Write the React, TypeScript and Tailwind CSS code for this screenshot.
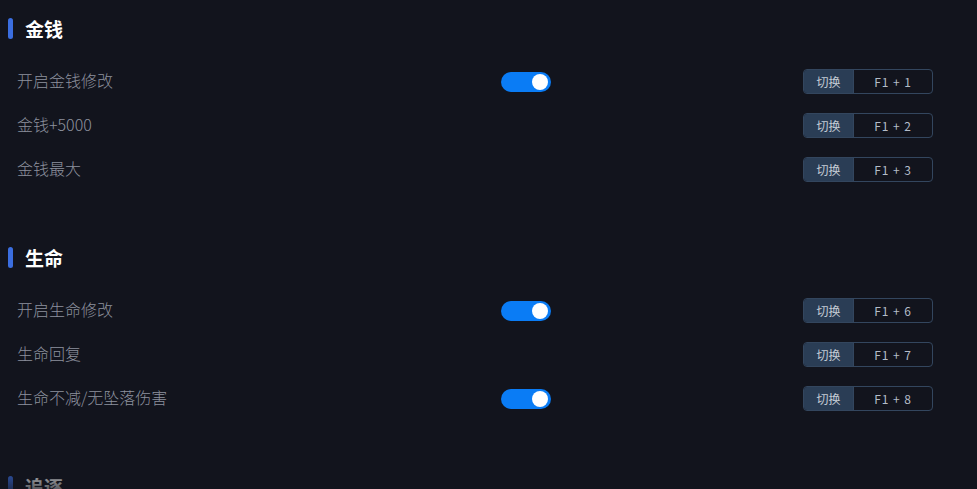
import React from "react"

type Row = { label: string; toggle?: boolean; key: string }

const SECTIONS: { title: string; rows: Row[] }[] = [
  {
    title: "金钱",
    rows: [
      { label: "开启金钱修改", toggle: true, key: "F1 + 1" },
      { label: "金钱+5000", key: "F1 + 2" },
      { label: "金钱最大", key: "F1 + 3" },
    ],
  },
  {
    title: "生命",
    rows: [
      { label: "开启生命修改", toggle: true, key: "F1 + 6" },
      { label: "生命回复", key: "F1 + 7" },
      { label: "生命不减/无坠落伤害", toggle: true, key: "F1 + 8" },
    ],
  },
  { title: "追逐", rows: [] },
]

function Toggle() {
  return (
    <div className="w-[50px] h-[20px] rounded-full bg-[#0a7cf5] flex items-center justify-end pr-[3px]">
      <div className="w-[16px] h-[16px] rounded-full bg-white" />
    </div>
  )
}

function KeyButton({ k }: { k: string }) {
  return (
    <div className="flex h-[25px] rounded-[4px] border border-[#33465e] overflow-hidden text-[12px]">
      <div className="w-[49px] bg-[#2a3d55] text-[#c4ccd6] flex items-center justify-center">切换</div>
      <div className="w-[79px] border-l border-[#33465e] text-[#b4bcc8] flex items-center justify-center tracking-[0.08em]">{k}</div>
    </div>
  )
}

export default function App() {
  return (
    <div
      className="relative w-[977px] h-[489px] overflow-hidden bg-[#12141d]"
      style={{ fontFamily: '"Noto Sans CJK SC", "Noto Sans", sans-serif' }}
    >
      <div className="pt-[17px]">
        {SECTIONS.map((s) => (
          <section key={s.title} className="mb-[64px]">
            <div className="flex items-center h-[22px] pl-[8px]">
              <div className="w-[5px] h-[21px] rounded-[3px] bg-[#3b6ee0]" />
              <h2 className="ml-[12px] text-[19px] font-bold text-white leading-none">{s.title}</h2>
            </div>
            <div className="mt-[30px] flex flex-col gap-[19px]">
              {s.rows.map((r) => (
                <div key={r.label} className="flex items-center h-[25px] pl-[17px] pr-[44px]">
                  <div className="w-[484px] pb-[3px] text-[16px] font-light text-[#8d919d]">{r.label}</div>
                  <div className="w-[50px]">{r.toggle && <Toggle />}</div>
                  <div className="flex-1" />
                  <KeyButton k={r.key} />
                </div>
              ))}
            </div>
          </section>
        ))}
      </div>
      <div className="pointer-events-none absolute left-0 right-0 bottom-0 h-[30px] bg-gradient-to-b from-transparent to-[#12141d]/70" />
    </div>
  )
}
